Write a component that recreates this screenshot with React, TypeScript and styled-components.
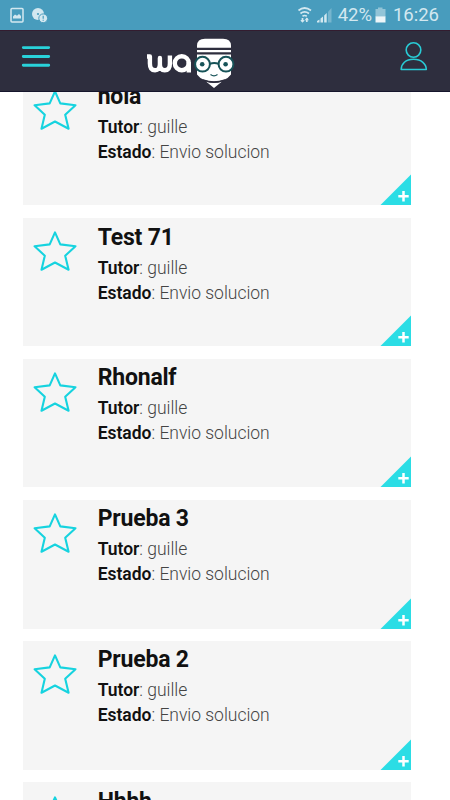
import React from "react";
import styled, { createGlobalStyle } from "styled-components";

const GlobalStyle = createGlobalStyle`
  * { box-sizing: border-box; }
  body { margin: 0; background: #fff; font-family: Roboto, sans-serif; }
`;

const Screen = styled.div`
  display: flex;
  flex-direction: column;
  width: 450px;
  height: 800px;
  overflow: hidden;
  background: #fff;
`;

const StatusBar = styled.div`
  display: flex;
  flex: none;
  justify-content: space-between;
  height: 30px;
  padding: 0 11px 0 10px;
  background: #489cbd;
  color: #d3e8f0;
`;

const StatusGroup = styled.div`
  display: flex;
  align-items: center;
`;

const StatusText = styled.span<{ $width: number }>`
  width: ${(p) => p.$width}px;
  font-size: 18.5px;
  line-height: 31px;
  white-space: nowrap;
  text-align: right;
`;

const Header = styled.header`
  display: grid;
  grid-template-columns: 147px 1fr 50px;
  flex: none;
  height: 62px;
  background: #2e2e3e;
  border-top: 1px solid #331c2f;
  border-bottom: 1px solid #15152c;
`;

const IconButton = styled.button`
  display: flex;
  padding: 0;
  border: 0;
  background: none;
`;

const Feed = styled.main`
  display: flex;
  flex: 1;
  min-height: 0;
  flex-direction: column;
  overflow: hidden;
`;

const List = styled.div`
  display: flex;
  flex-direction: column;
  gap: 12.5px;
  margin: -15.5px 39px 0 22.7px;
`;

const Details = styled.div`
  padding-top: 5.4px;
`;

const Card = styled.article`
  display: grid;
  grid-template-columns: 75px 1fr 31px;
  flex: none;
  height: 128.65px;
  background: #f5f5f5;

  &:nth-child(-n + 2) ${Details} { padding-top: 6.2px; }
`;

const StarButton = styled(IconButton)`
  padding: 12.4px 0 0 10.3px;
  align-items: flex-start;
`;

const Title = styled.h2`
  margin: 0 0 5px;
  color: #111;
  font-size: 23px;
  font-weight: 700;
  letter-spacing: -0.2px;
  line-height: 27px;
  white-space: nowrap;
`;

const Line = styled.p`
  margin: 0;
  color: #444;
  font-size: 17.5px;
  font-weight: 300;
  letter-spacing: -0.02px;
  line-height: 25px;
  white-space: nowrap;

  b { color: #111; font-weight: 600; }
`;

const AddButton = styled(IconButton)`
  align-self: end;
`;

const StatusIcons = () => (
  <svg width="40" height="30" viewBox="0 0 40 30">
    <rect x="1" y="8.5" width="12" height="13.5" rx="1" fill="none" stroke="#d3e8f0" strokeWidth="1.5" />
    <path d="M3 18.5v-2l2-2 2 1.2 2-1.8 2 2.2v2.4z" fill="#d3e8f0" />
    <circle cx="28" cy="14" r="6" fill="#d3e8f0" />
    <circle cx="28" cy="14" r="1.1" fill="#489cbd" />
    <circle cx="33.2" cy="18.3" r="4.4" fill="#d3e8f0" stroke="#489cbd" />
    <path d="M33.2 15.8v3M33.2 19.8v1" stroke="#489cbd" strokeWidth="1.2" />
  </svg>
);

const Network = () => (
  <svg width="36" height="30" viewBox="297 0 36 30">
    <g fill="none" stroke="#d3e8f0" strokeWidth="1.7">
      <path d="M298.5 10.5q6-5 12.5 0M300.5 13.5q4-3.2 8.5 0M302.5 16.2q2-1.4 4.3 0" />
      <path d="M302.5 18v4M306.8 22v-4" />
    </g>
    <path d="M300.3 20h4.4l-2.2 2.7zM304.6 20.2h4.4l-2.2-2.7z" fill="#d3e8f0" />
    <path d="M317 22.5v-1.6l2.5-1.3v2.9zM320.5 22.5v-4l2.5-2v6zM324.2 22.5v-7l2.5-2.4v9.4z" fill="#d3e8f0" />
    <path d="M328 22.5V11.8l3.5-3.8v14.5z" fill="#77b5ce" />
  </svg>
);

const Battery = () => (
  <svg width="18" height="30" viewBox="373 0 18 30">
    <path d="M376.5 9h2.5V7.5h4.5V9h3v7.5h-10z" fill="#92c4d7" />
    <path d="M376.5 16.3h10v6.2h-10z" fill="#edf6f9" />
  </svg>
);

const Menu = () => (
  <svg width="147" height="60" viewBox="0 31 147 60">
    <path d="M23.3 47.6h25.4M23.3 56.5h25.4M23.3 65.2h25.4" stroke="#29d2da" strokeWidth="2.9" strokeLinecap="round" />
  </svg>
);

const Logo = () => (
  <svg width="90" height="60" viewBox="147 31 90 60" aria-label="wa">
    <g fill="none" stroke="#fff" strokeWidth="4.4" strokeLinejoin="round">
      <path d="M147 56.5h2.9v7q0 6.8 5.2 6.8 4.6 0 4.8-6V58v6.3q0 6 4.8 6 5.2 0 5.2-6.8v-8" />
      <circle cx="181.8" cy="63.2" r="7" />
      <path d="M188.8 62v10.5" />
    </g>
    <path d="M197 47.8v-2q0-7 8-7h18q8 0 8 7v2z" fill="#fff" />
    <path d="M197 50h34v2.2h-34zM197 54.4h34v20q-5 6.8-17 7.2-12-.4-17-7.2z" fill="#fff" />
    <path d="M206 81.5q8 3 16 0l-8 6.5z" fill="#fff" />
    <path d="M203 79.800q11 4.400 22 0" fill="none" stroke="#2e2e3e" strokeWidth="1.400" />
    <g fill="#fff" stroke="#175358" strokeWidth="2">
      <circle cx="202.5" cy="64.2" r="7.4" />
      <circle cx="226" cy="64.2" r="7.4" />
      <path d="M209.9 63.7q4.3-1.6 8.7 0" fill="none" />
    </g>
    <circle cx="202.2" cy="64.3" r="2.3" fill="#175358" />
    <circle cx="225.6" cy="64.3" r="2.3" fill="#175358" />
    <path d="M210.5 74.5q3.5 2.6 7 0" fill="none" stroke="#175358" strokeWidth="1.2" />
  </svg>
);

const User = () => (
  <svg width="50" height="60" viewBox="400 31 50 60" fill="none" stroke="#29cbd5" strokeWidth="1.6">
    <circle cx="413.5" cy="50" r="7.3" />
    <path d="M401.2 69.5c0-5.7 4.4-10.2 12.3-10.2s12.8 4.5 12.8 10.2z" strokeLinejoin="round" />
  </svg>
);

const Star = () => (
  <svg width="44" height="44" viewBox="0 0 44 44">
    <path d="M22 2.4l5.3 12 15.2 1.8-10.3 9.5 3.4 14L22 32.5 8.5 39.7l3.3-14L1.6 16.2l15.1-1.8z" fill="none" stroke="#16d3df" strokeWidth="2.1" strokeLinejoin="round" />
  </svg>
);

const CornerPlus = () => (
  <svg width="31" height="31" viewBox="0 0 31 31">
    <path d="M31 .5V31H.5z" fill="#2bdde5" />
    <path d="M18.3 22.3h10.4M23.5 17v10.5" stroke="#fff" strokeWidth="2.5" />
  </svg>
);

const tasks = ["hola", "Test 71", "Rhonalf", "Prueba 3", "Prueba 2", "Hhhh"];

const TaskCard = ({ title }: { title: string }) => (
  <Card>
    <StarButton aria-label="Favorito"><Star /></StarButton>
    <Details>
      <Title>{title}</Title>
      <Line><b>Tutor</b>: guille</Line>
      <Line><b>Estado</b>: Envio solucion</Line>
    </Details>
    <AddButton aria-label="Abrir"><CornerPlus /></AddButton>
  </Card>
);

export default function App() {
  return (
    <Screen>
      <GlobalStyle />
      <StatusBar>
        <StatusGroup><StatusIcons /></StatusGroup>
        <StatusGroup>
          <Network />
          <StatusText $width={39}>42%</StatusText>
          <Battery />
          <StatusText $width={49}>16:26</StatusText>
        </StatusGroup>
      </StatusBar>
      <Header>
        <IconButton aria-label="Menu"><Menu /></IconButton>
        <Logo />
        <IconButton aria-label="Perfil"><User /></IconButton>
      </Header>
      <Feed>
        <List>
          {tasks.map((title) => <TaskCard key={title} title={title} />)}
        </List>
      </Feed>
    </Screen>
  );
}
